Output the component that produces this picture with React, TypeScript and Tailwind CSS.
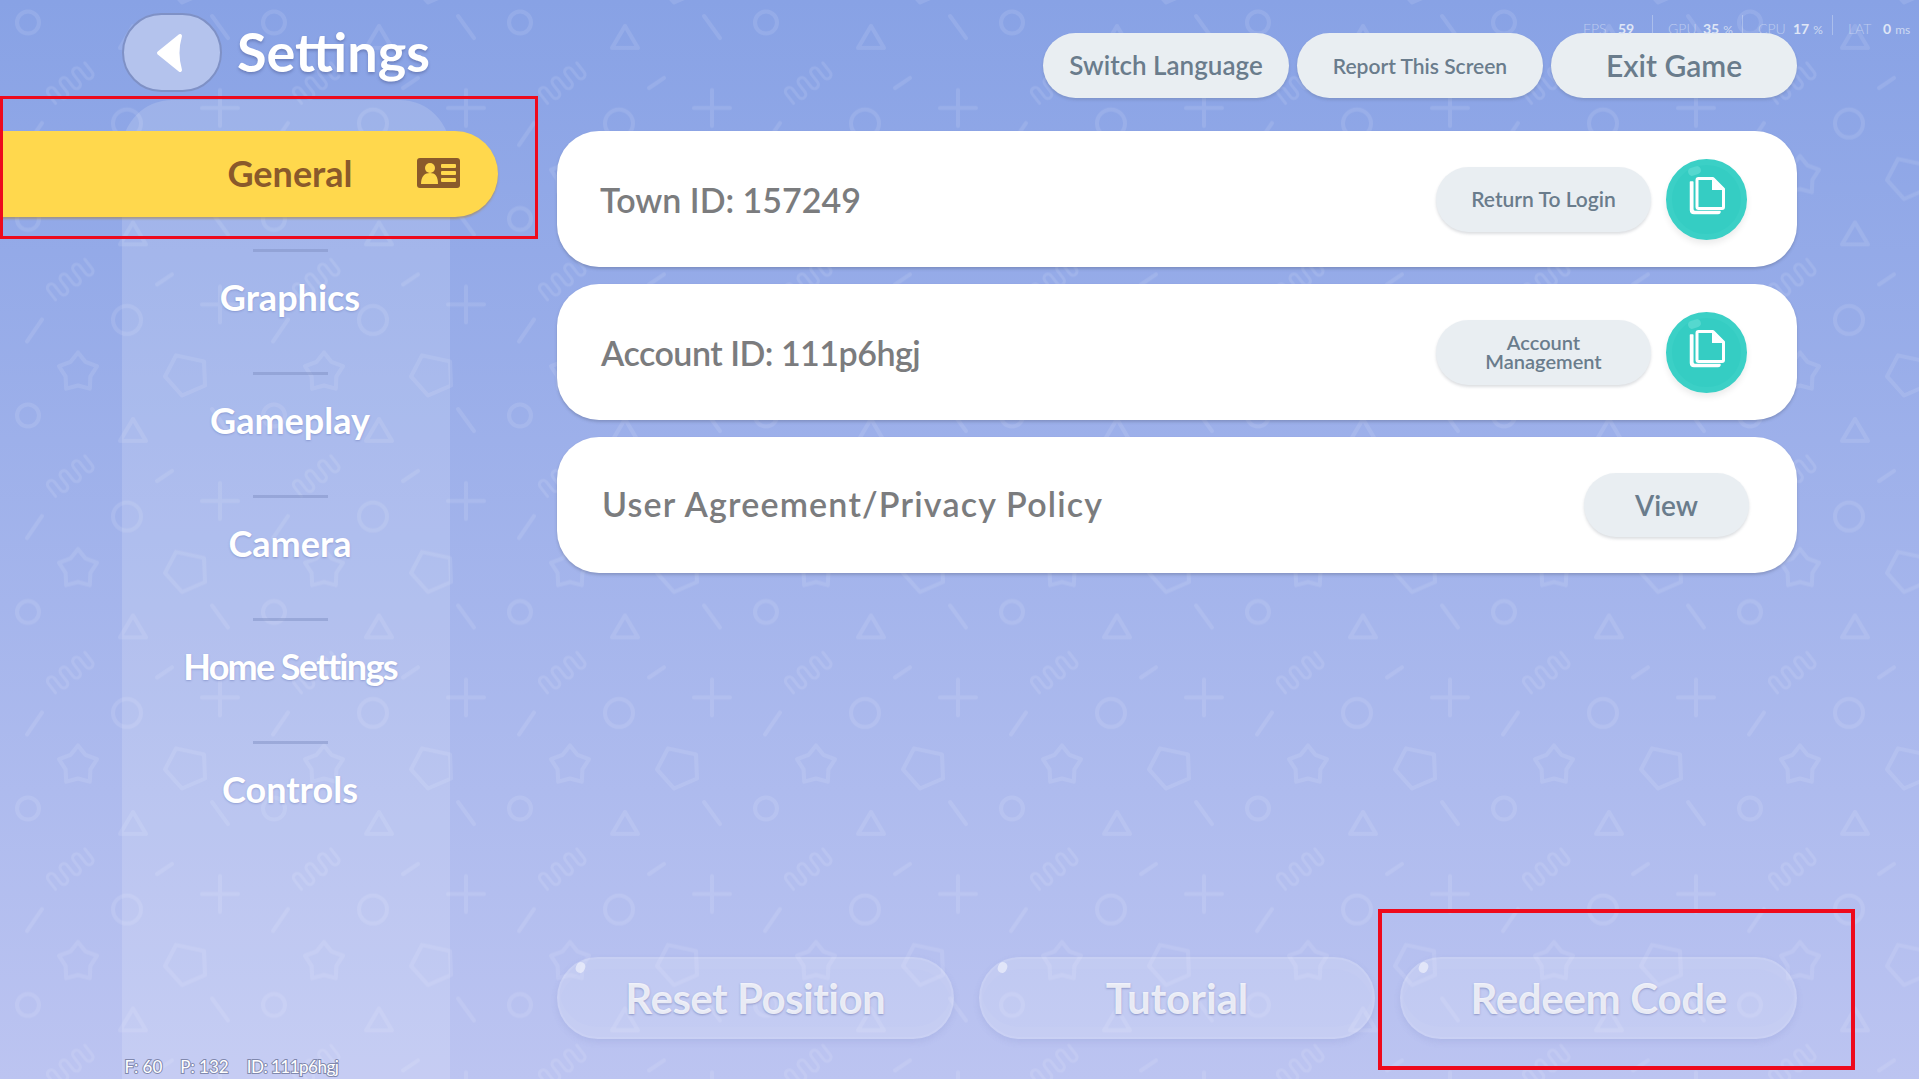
import React from 'react';

const navItems = ['General', 'Graphics', 'Gameplay', 'Camera', 'Home Settings', 'Controls'];
const actions = [
  { label: 'Reset Position', className: 'tracking-[-0.5px]' },
  { label: 'Tutorial', className: '' },
  { label: 'Redeem Code', className: 'tracking-[-0.3px]' },
];

function BackgroundPattern() {
  return (
    <svg className="absolute inset-0 h-full w-full" aria-hidden="true">
      <defs>
        <pattern id="shapes" width="246" height="196.5" y="5" patternUnits="userSpaceOnUse">
          <g
            transform="translate(0 -15)"
            fill="none"
            stroke="#ffffff"
            strokeOpacity="0.1"
            strokeWidth="4"
            strokeLinecap="round"
            strokeLinejoin="round"
          >
            <circle cx="28" cy="32.5" r="11" />
            <circle cx="127" cy="133.5" r="14" />
            <path d="M133 36 L146 58 L120 58 Z" />
            <path d="M212 26 L228 48" />
            <path d="M27 155 L42 133" />
            <path d="M157 98 L172 88" />
            <path d="M220 100 V136 M202 118 H238" />
            <path d="M176 169 L204 175 L205 199 L182 209 L165 190 Z" />
            <path d="M78 166 L85.6 175.5 L97 179.8 L90.4 190 L89.8 202.2 L78 199 L66.2 202.2 L65.6 190 L59 179.8 L70.4 175.5 Z" />
            <path
              transform="translate(71 92.5) rotate(-38)"
              strokeWidth="3"
              d="M-25 7 V-5 a4 4 0 0 1 8 0 V5 a4 4 0 0 0 8 0 V-5 a4 4 0 0 1 8 0 V5 a4 4 0 0 0 8 0 V-5 a4 4 0 0 1 8 0 V5 a4 4 0 0 0 8 0 V-7"
            />
          </g>
        </pattern>
      </defs>
      <rect width="100%" height="100%" fill="url(#shapes)" />
    </svg>
  );
}

function IdCardIcon() {
  return (
    <svg className="absolute left-[417px] top-[27px] h-[30px] w-[43px]" viewBox="0 0 43 30" aria-hidden="true">
      <rect width="43" height="30" rx="3" fill="#8a5a2b" />
      <circle cx="13" cy="10" r="5" fill="#ffd84d" />
      <path d="M4 26 C4 18 8 15 13 15 C18 15 21 18 21 26 Z" fill="#ffd84d" />
      <rect x="24" y="6" width="15" height="4" rx="1" fill="#ffd84d" />
      <rect x="24" y="13" width="15" height="4" rx="1" fill="#ffd84d" />
      <rect x="24" y="20" width="15" height="4" rx="1" fill="#ffd84d" />
    </svg>
  );
}

function CopyButton() {
  return (
    <button className="relative flex h-[81px] w-[81px] shrink-0 items-center justify-center rounded-full border-[6px] border-[#3bd0c6] bg-[#35cdc3] shadow-[0_4px_6px_rgba(0,0,0,0.08)]">
      <span className="absolute left-[16px] top-[2px] h-[8px] w-[13px] -rotate-[20deg] rounded-full bg-[#55d8cf]" />
      <svg className="-translate-y-[3px]" width="36" height="38" viewBox="0 0 36 38" aria-hidden="true">
        <path d="M1.5 5 V33 Q1.5 36.5 5 36.5 H29 Q31 36.5 31 34.5 H6 Q3.8 34.5 3.8 32 V5 Z" fill="#ffffff" stroke="#ffffff" strokeWidth="1.5" strokeLinejoin="round" />
        <path d="M8 3 Q8 1.5 9.5 1.5 H24 L34.5 12 V30 Q34.5 31.5 33 31.5 H9.5 Q8 31.5 8 30 Z" fill="none" stroke="#ffffff" strokeWidth="3" strokeLinejoin="round" />
        <path d="M23 2 V13 H34 Z" fill="#ffffff" />
      </svg>
    </button>
  );
}

function GreyButton({ className, children }: { className: string; children: React.ReactNode }) {
  return (
    <button className={`flex items-center justify-center rounded-full bg-[#e9eef2] font-semibold text-[#6a7c8c] shadow-[0_2px_3px_rgba(60,70,90,0.18)] ${className}`}>
      {children}
    </button>
  );
}

function Card({ label, className, children }: { label: string; className: string; children: React.ReactNode }) {
  return (
    <div className="flex h-[136px] items-center justify-between rounded-[42px] bg-white pl-[43px] pr-[50px] shadow-[0_2px_3px_rgba(70,80,110,0.3)]">
      <span className={`text-[34px] font-semibold text-[#7b7c7e] ${className}`}>{label}</span>
      <div className="flex items-center gap-[15px]">{children}</div>
    </div>
  );
}

function Stat({ name, value, unit, className }: { name: string; value: string; unit?: string; className: string }) {
  return (
    <span className={`mt-[6px] flex items-baseline text-[14px] text-[#dfe6f6] ${className}`}>
      <span className="w-[35px] shrink-0 font-light opacity-60">{name}</span>
      <span className="flex items-baseline gap-[4px]">
        <span className="font-bold">{value}</span>
        {unit && <span className="text-[12px] opacity-80">{unit}</span>}
      </span>
    </span>
  );
}

export default function App() {
  return (
    <div className="relative flex h-screen w-screen overflow-hidden bg-gradient-to-b from-[#88a2e5] to-[#bcc4f1] font-['Lato',sans-serif]">
      <BackgroundPattern />

      <aside className="relative flex w-[557px] shrink-0 flex-col">
        <header className="flex h-[100px] items-start pl-[122px] pt-[13px]">
          <button className="flex h-[79px] w-[100px] items-center justify-center rounded-full border-2 border-[#7f91c6] bg-[#b4c3ed]">
            <svg className="-translate-x-[2px]" width="28" height="40" viewBox="0 0 28 40" aria-hidden="true">
              <path d="M24 3 L3 20 L24 37 Q19 20 24 3 Z" fill="#ffffff" stroke="#ffffff" strokeWidth="4" strokeLinejoin="round" />
            </svg>
          </button>
          <h1 className="ml-[15px] text-[54px] font-bold leading-[78px] text-white [text-shadow:0_2px_3px_rgba(70,85,140,0.45)]">Settings</h1>
        </header>

        <nav className="ml-[122px] flex w-[328px] flex-1 flex-col items-center rounded-t-[50px] bg-white/15 pl-[8px]">
          {navItems.map((item, i) => (
            <React.Fragment key={item}>
              {i > 0 && <div className="h-[3px] w-[75px] shrink-0 bg-[#7f8fc4]/50" />}
              {i === 0 ? (
                <div className="h-[149px] shrink-0 self-start pt-[31px]">
                  <div className="relative -ml-[130px] flex h-[86px] w-[498px] items-center rounded-r-full bg-[#ffd84d] pb-[2px] pl-[130px] shadow-[0_2px_2px_rgba(170,130,60,0.5)]">
                    <span className="w-[320px] text-center text-[36px] font-bold text-[#8a5a2b]">{item}</span>
                    <IdCardIcon />
                  </div>
                </div>
              ) : (
                <div className={`flex h-[120px] shrink-0 items-center pb-[31px] text-[36px] font-bold text-white [text-shadow:0_1px_2px_rgba(90,105,170,0.4)] ${item === 'Home Settings' ? 'tracking-[-1.7px]' : ''}`}>
                  {item}
                </div>
              )}
            </React.Fragment>
          ))}
          <div className="-ml-[11px] mt-auto flex w-full gap-[18px] text-[17px] text-white [-webkit-text-stroke:2px_#8088ad] [paint-order:stroke]">
            <span>F: 60</span>
            <span>P: 132</span>
            <span className="tracking-[-0.5px]">ID: 111p6hgj</span>
          </div>
        </nav>
      </aside>

      <main className="relative flex flex-1 flex-col pb-[40px] pr-[122px]">
        <div className="flex h-[131px] justify-end gap-[8px] pt-[33px]">
          <GreyButton className="h-[65px] w-[246px] text-[26px]">Switch Language</GreyButton>
          <GreyButton className="h-[65px] w-[246px] text-[21px]">Report This Screen</GreyButton>
          <GreyButton className="h-[65px] w-[246px] text-[30px]">Exit Game</GreyButton>
        </div>

        <div className="flex flex-col gap-[17px]">
          <Card label="Town ID: 157249" className="">
            <GreyButton className="h-[65px] w-[215px] text-[21px]">Return To Login</GreyButton>
            <CopyButton />
          </Card>
          <Card label="Account ID: 111p6hgj" className="ml-[1px] tracking-[-0.5px]">
            <GreyButton className="h-[65px] w-[215px] text-[20px] leading-[19px]">
              <span>
                Account
                <br />
                Management
              </span>
            </GreyButton>
            <CopyButton />
          </Card>
          <Card label="User Agreement/Privacy Policy" className="ml-[2px] -translate-y-[2px] tracking-[1.2px]">
            <GreyButton className="-mr-[2px] h-[64px] w-[165px] text-[28px]">View</GreyButton>
          </Card>
        </div>

        <div className="mt-auto grid grid-cols-3 gap-[25px]">
          {actions.map(action => (
            <button
              key={action.label}
              className={`relative flex h-[82px] items-center justify-center rounded-full border-2 border-white/10 bg-white/15 text-[42px] font-bold text-white/80 shadow-[0_3px_6px_rgba(110,120,190,0.15),inset_0_-10px_0_rgba(255,255,255,0.04),inset_0_10px_0_rgba(255,255,255,0.03)] [text-shadow:0_1px_2px_rgba(90,100,160,0.5)] ${action.className}`}
            >
              <span className="absolute left-[17px] top-[3px] h-[11px] w-[9px] rotate-[25deg] rounded-full bg-white/50" />
              {action.label}
            </button>
          ))}
        </div>
      </main>

      {/* overlays: perf counter and the red markup boxes */}
      <div className="absolute left-[1583px] top-[15px] flex h-[20px] items-center gap-[15px]">
        <Stat name="FPS" value="59" className="w-[54px]" />
        <div className="h-[20px] w-px bg-[#dfe6f6]/40" />
        <Stat name="GPU" value="35" unit="%" className="w-[59px]" />
        <div className="h-[20px] w-px bg-[#dfe6f6]/40" />
        <Stat name="CPU" value="17" unit="%" className="w-[59px]" />
        <div className="h-[20px] w-px bg-[#dfe6f6]/40" />
        <Stat name="LAT" value="0" unit="ms" className="w-[58px]" />
      </div>
      <div className="absolute left-0 top-[96px] h-[143px] w-[538px] border-[3px] border-[#ee0a1c]" />
      <div className="absolute left-[1378px] top-[909px] h-[161px] w-[477px] border-4 border-[#ee0a1c]" />
    </div>
  );
}
